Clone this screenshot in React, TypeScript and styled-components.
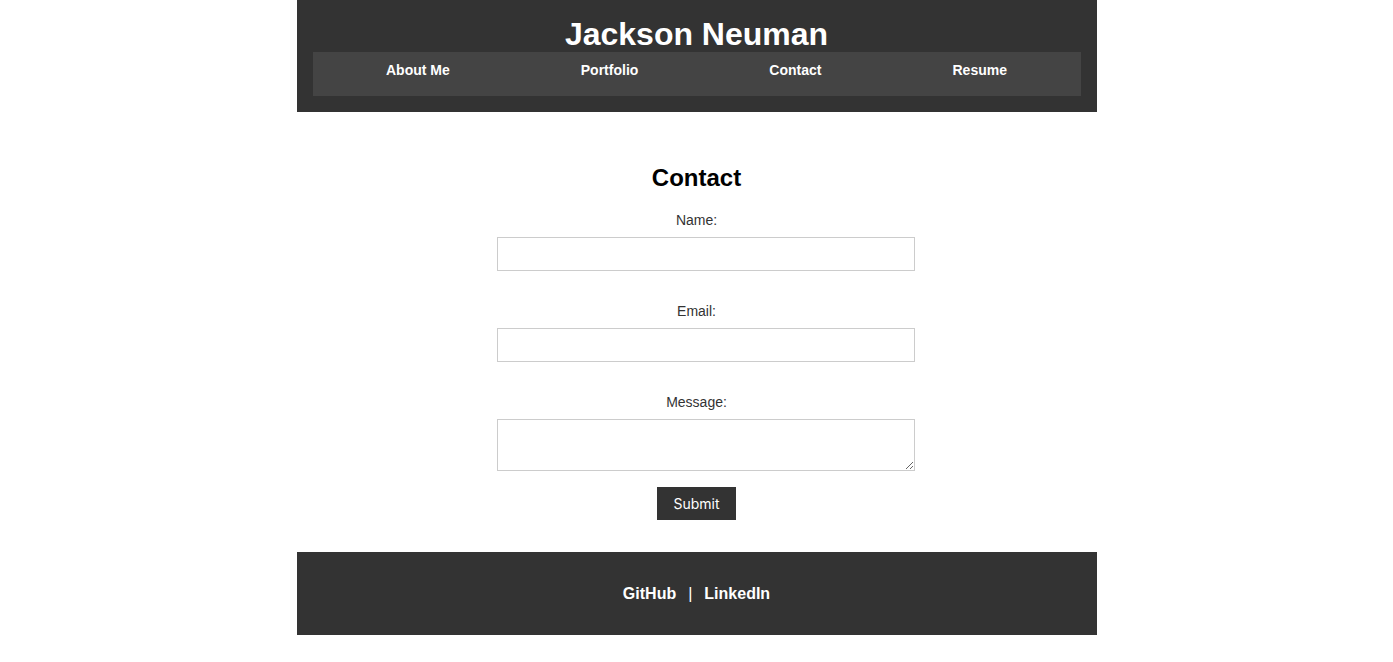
import styled, {createGlobalStyle} from 'styled-components';

const GlobalStyle = createGlobalStyle`
  body {
    margin: 0;
    font-family: "Liberation Sans", Arial, sans-serif;
    background: #fff;
    color: #000;
  }
`;

const Page = styled.div`
  width: 800px;
  margin: 0 auto;
`;

const Header = styled.header`
  background: #333;
  color: #fff;
  padding: 16px;
  text-align: center;
`;

const Title = styled.h1`
  margin: 0;
  font-size: 32px;
  line-height: 36px;
  font-weight: bold;
`;

const Nav = styled.nav`
  background: #444;
  padding: 10px 8px 18px;
`;

const NavList = styled.ul`
  list-style: none;
  margin: 0;
  padding: 0;
  display: flex;
  justify-content: space-around;
  font-size: 14px;
  line-height: 16px;
`;

const NavLink = styled.a`
  color: #fff;
  text-decoration: none;
  font-weight: bold;
`;

const Main = styled.main`
  padding: 32px 0;
  text-align: center;
`;

const Heading = styled.h2`
  margin: 20px 0;
  font-size: 24px;
  line-height: 28px;
`;

const Form = styled.form`
  max-width: 400px;
  margin: 0 auto;
  text-align: center;
`;

const Field = styled.div`
  padding-bottom: 16px;
`;

const Label = styled.label`
  display: block;
  font-size: 14px;
  line-height: 16px;
  color: #333;
  margin-bottom: 9px;
`;

const Input = styled.input`
  display: block;
  width: 100%;
  height: 16px;
  padding: 8px;
  margin: 0 0 16px;
  border: 1px solid #ccc;
  font-family: inherit;
  font-size: 14px;
`;

const TextArea = styled.textarea`
  display: block;
  width: 100%;
  height: 34px;
  padding: 8px;
  margin: 0;
  border: 1px solid #ccc;
  font-family: inherit;
  font-size: 14px;
`;

const SubmitButton = styled.button`
  background: #333;
  color: #fff;
  border: none;
  height: 33px;
  padding: 0 16px;
  font-family: Inter, "Liberation Sans", sans-serif;
  font-size: 14px;
  cursor: pointer;
`;

const Footer = styled.footer`
  background: #333;
  color: #fff;
  padding: 32px;
  text-align: center;
  font-size: 16px;
  font-weight: bold;
  line-height: 19px;
`;

const FooterLink = styled.a`
  color: #fff;
  text-decoration: none;
`;

const Divider = styled.span`
  margin: 0 12px;
  font-weight: normal;
`;

const links = ['About Me', 'Portfolio', 'Contact', 'Resume'];

export default function App() {
  return (
    <Page>
      <GlobalStyle />
      <Header>
        <Title>Jackson Neuman</Title>
        <Nav>
          <NavList>
            {links.map(l => (
              <li key={l}>
                <NavLink href="#">{l}</NavLink>
              </li>
            ))}
          </NavList>
        </Nav>
      </Header>
      <Main>
        <Heading>Contact</Heading>
        <Form onSubmit={e => e.preventDefault()}>
          <Field>
            <Label htmlFor="name">Name:</Label>
            <Input id="name" type="text" />
          </Field>
          <Field>
            <Label htmlFor="email">Email:</Label>
            <Input id="email" type="email" />
          </Field>
          <Field>
            <Label htmlFor="message">Message:</Label>
            <TextArea id="message" />
          </Field>
          <SubmitButton type="submit">Submit</SubmitButton>
        </Form>
      </Main>
      <Footer>
        <FooterLink href="#">GitHub</FooterLink>
        <Divider>|</Divider>
        <FooterLink href="#">LinkedIn</FooterLink>
      </Footer>
    </Page>
  );
}
